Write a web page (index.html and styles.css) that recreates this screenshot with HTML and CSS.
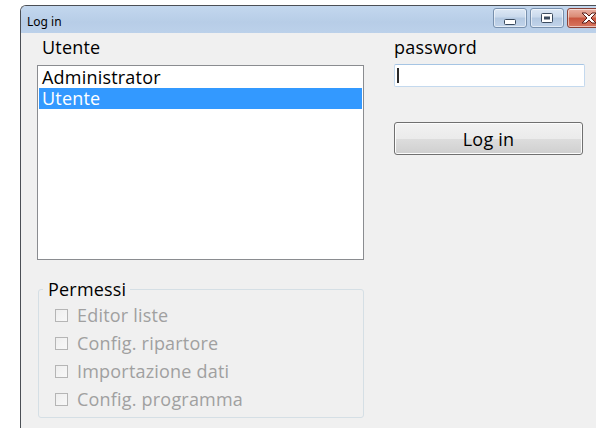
FILE: index.html
```html
<!DOCTYPE html>
<html lang="it">
<head>
<meta charset="utf-8">
<title>Log in</title>
<link rel="stylesheet" href="styles.css">
</head>
<body>
<div class="window">
  <div class="titlebar">
    <span class="title">Log in</span>
    <div class="caption-buttons">
      <span class="cbtn min">
        <svg width="12" height="6" viewBox="0 0 12 6"><rect x="0.5" y="0.5" width="11" height="5" rx="1" fill="#fff" stroke="#3a4a5e"/></svg>
      </span>
      <span class="cbtn max">
        <svg width="12" height="10" viewBox="0 0 12 10"><rect x="0.5" y="0.5" width="11" height="9" rx="1" fill="#fff" stroke="#3a4a5e"/><rect x="3" y="3.5" width="6" height="3" fill="#3a4a5e"/></svg>
      </span>
      <span class="cbtn close">
        <svg width="16" height="12" viewBox="0 0 16 12"><path d="M1 1 H5 L8 4 L11 1 H15 L10 6 L15 11 H11 L8 8 L5 11 H1 L6 6 Z" fill="#fff" stroke="#5a1d17" stroke-width="1" stroke-linejoin="round"/></svg>
      </span>
    </div>
  </div>
  <div class="client">
    <div class="col-left">
      <div class="label indent">Utente</div>
      <div class="listbox">
        <div class="item">Administrator</div>
        <div class="item selected">Utente</div>
      </div>
      <fieldset class="group">
        <legend>Permessi</legend>
        <label class="check"><span class="box"></span>Editor liste</label>
        <label class="check"><span class="box"></span>Config. ripartore</label>
        <label class="check"><span class="box"></span>Importazione dati</label>
        <label class="check"><span class="box"></span>Config. programma</label>
      </fieldset>
    </div>
    <div class="col-right">
      <div class="label">password</div>
      <div class="input"><span class="caret"></span></div>
      <button class="btn" type="button">Log in</button>
    </div>
  </div>
</div>
</body>
</html>
```

FILE: styles.css
```css
html, body {
  margin: 0;
  width: 596px;
  height: 428px;
  overflow: hidden;
  background: #ffffff;
}

.window {
  margin: 5px 0 0 20px;
  width: 597px;
  height: 440px;
  border-left: 1px solid #4b4f55;
  border-top: 1px solid #4b4f55;
  border-top-left-radius: 6px;
  background: #f0f0f0;
  overflow: hidden;
  font-family: "Open Sans", "Noto Sans", sans-serif;
  color: #000;
}

/* caption */
.titlebar {
  height: 27px;
  display: flex;
  align-items: flex-start;
  background: linear-gradient(#c3d7ee, #b7cde7 60%, #bcd1ea);
}

.title {
  font-family: "Noto Sans", "Open Sans", sans-serif;
  font-size: 12px;
  line-height: 16px;
  margin: 8px 0 0 6px;
}

.caption-buttons {
  margin: 2px 8px 0 auto;
  display: flex;
  gap: 3px;
}

.cbtn {
  height: 18px;
  display: flex;
  align-items: center;
  justify-content: center;
  border: 1px solid #7890ad;
  border-radius: 3px;
  box-shadow: inset 0 0 0 1px rgba(255, 255, 255, 0.55);
}

.cbtn.min,
.cbtn.max {
  width: 32px;
  background: linear-gradient(#dde8f5, #c9d9ec 45%, #b3c8e1 50%, #c2d4ea);
}

.cbtn.min svg { margin-top: 7px; }

.cbtn.close {
  width: 41px;
  border-color: #8a4338;
  background: linear-gradient(#eab0a2, #da8a74 45%, #c9563f 50%, #d87660);
}

/* client area */
.client {
  display: flex;
  gap: 30px;
  padding: 4px 0 0 16px;
  font-size: 18px;
  letter-spacing: 0.2px;
}

.label {
  line-height: 20px;
}

.label.indent {
  padding-left: 5px;
}

.col-left {
  width: 327px;
}

.listbox {
  margin-top: 8px;
  height: 191px;
  border: 1px solid #8a8c90;
  background: #fff;
  padding: 1px;
}

.item {
  height: 21px;
  line-height: 21px;
  padding-left: 3px;
}

.item.selected {
  background: #3399ff;
  color: #fff;
}

.group {
  margin: 19px 0 0 1px;
  width: 326px;
  box-sizing: border-box;
  height: 139px;
  border: 1px solid #d5dfe5;
  border-radius: 3px;
  padding: 2px 0 0 16px;
  min-width: 0;
}

.group legend {
  line-height: 20px;
  padding: 0 4px 0 5px;
  margin-left: -12px;
}

.check {
  display: flex;
  align-items: center;
  height: 28px;
  color: #a0a0a0;
}

.box {
  width: 11px;
  height: 11px;
  border: 1px solid #b5b5b5;
  background: linear-gradient(135deg, #eeeeee, #f8f8f8);
  margin-right: 9px;
}

.col-right {
  width: 190px;
}

.input {
  margin-top: 7px;
  height: 21px;
  width: 189px;
  border: 1px solid #c4d9ee;
  border-top-color: #a6c5e4;
  border-radius: 2px;
  background: #fff;
  display: flex;
  align-items: center;
}

.caret {
  width: 2px;
  height: 15px;
  margin-left: 2px;
  background: #2b2b2b;
}

.btn {
  display: block;
  margin-top: 35px;
  width: 189px;
  height: 33px;
  border: 1px solid #707070;
  border-radius: 3px;
  box-shadow: inset 0 0 0 1px #fcfcfc;
  background: linear-gradient(#f2f2f2, #ebebeb 50%, #dddddd 51%, #cfcfcf);
  font-family: "Open Sans", "Noto Sans", sans-serif;
  font-size: 18px;
  letter-spacing: 0.2px;
  color: #000;
  padding: 0;
}
```
